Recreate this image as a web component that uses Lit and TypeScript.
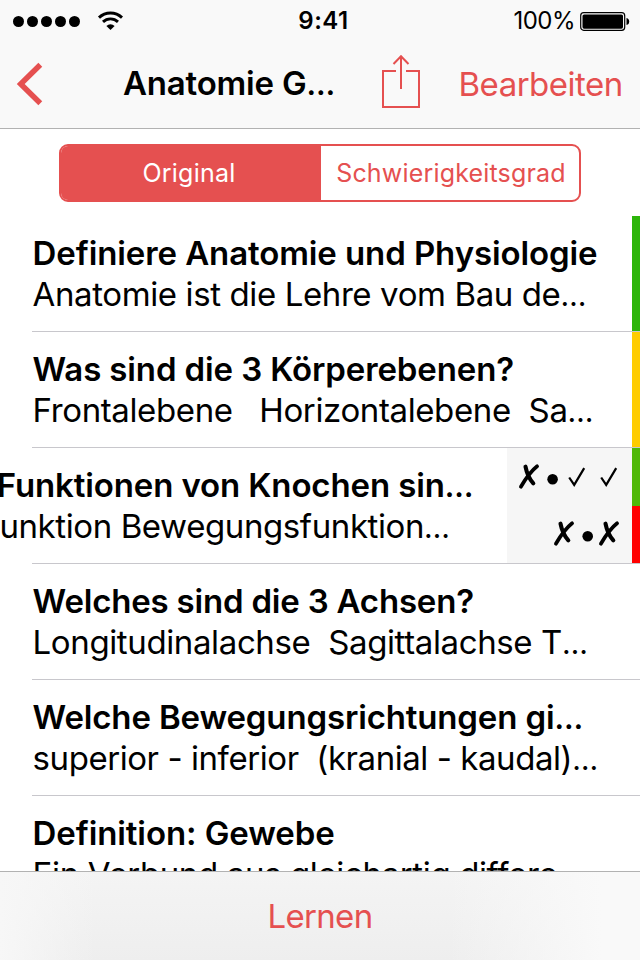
import { LitElement, html, css, svg, nothing } from "lit";
import { customElement, property } from "lit/decorators.js";

interface Card {
  title: string;
  detail: string;
  titleTracking: number;
  detailTracking: number;
  levels: string[];
  swiped?: boolean;
}

const cards: Card[] = [
  { title: "Definiere Anatomie und Physiologie", detail: "Anatomie ist die Lehre vom Bau de…", titleTracking: -0.1, detailTracking: -0.39, levels: ["#2db50a"] },
  { title: "Was sind die 3 Körperebenen?", detail: "Frontalebene   Horizontalebene  Sa…", titleTracking: -0.12, detailTracking: -0.38, levels: ["#ffcc00"] },
  { title: "Funktionen von Knochen sin…", detail: "unktion Bewegungsfunktion…", titleTracking: -0.13, detailTracking: -0.4, levels: ["#4fb808", "#ff0000"], swiped: true },
  { title: "Welches sind die 3 Achsen?", detail: "Longitudinalachse  Sagittalachse T…", titleTracking: -0.2, detailTracking: -0.38, levels: [] },
  { title: "Welche Bewegungsrichtungen gi…", detail: "superior - inferior  (kranial - kaudal)…", titleTracking: -0.15, detailTracking: -0.44, levels: [] },
  { title: "Definition: Gewebe", detail: "Ein Verbund aus gleichartig differe…", titleTracking: -0.1, detailTracking: -0.37, levels: [] },
];

const cross = (x: number, y: number) => svg`
  <g transform="translate(${x} ${y})" fill="none" stroke="#000" stroke-linecap="round">
    <path d="M2.4 22.4C5 18 11 8 18.6 2" stroke-width="3.7"/>
    <path d="M7 2.4C8.2 8.5 11 15 14.8 19" stroke-width="4.1"/>
  </g>`;
const check = (x: number, y: number) => svg`
  <path transform="translate(${x} ${y})" d="M1 10L6 17.4L16 .6" fill="none" stroke="#000" stroke-width="2.2"/>`;
const dot = (x: number, y: number) => svg`<circle cx=${x} cy=${y} r="5.3"/>`;

/** Sets the trailing ellipsis slightly tighter than the text before it. */
const truncated = (text: string) =>
  text.endsWith("…") ? html`${text.slice(0, -1)}<span class="dots">…</span>` : text;

@customElement("card-row")
export class CardRow extends LitElement {
  @property({ attribute: false }) card!: Card;

  static styles = css`
    :host { display: flex; height: 116px; position: relative; }
    .body { flex: 1; min-width: 0; margin-left: 32px; border-bottom: 1px solid #c8c7cc; padding-top: 17px; box-sizing: border-box; overflow: visible; }
    .line { height: 41px; line-height: 41px; margin-left: 0.6px; font-size: 33px; white-space: pre; color: #000; }
    .title { font-weight: 600; }
    .dots { font-size: 30px; }
    .swiped .line { margin-left: -35.2px; }
    .swiped .detail { margin-left: -32.6px; }
    .history { width: 125px; height: 115px; background: #f6f6f6; border-bottom: 1px solid #c8c7cc; }
    .history svg { display: block; }
    .levels { width: 8px; display: flex; flex-direction: column; height: 115px; border-bottom: 1px solid #c8c7cc; }
    .level { flex: 1; }
  `;

  render() {
    const c = this.card;
    return html`
      <div class="body ${c.swiped ? "swiped" : ""}">
        <div class="line title" style="letter-spacing:${c.titleTracking}px">${truncated(c.title)}</div>
        <div class="line detail" style="letter-spacing:${c.detailTracking}px">${truncated(c.detail)}</div>
      </div>
      ${c.swiped
        ? html`<div class="history">
            <svg width="125" height="115" viewBox="0 0 125 115">
              ${cross(11.5, 16.3)}${dot(45.6, 31.2)}${check(61.2, 19.5)}${check(93.2, 19.5)}
              ${cross(46.5, 73.3)}${dot(80.7, 88.2)}${cross(91.5, 73.3)}
            </svg>
          </div>`
        : nothing}
      <div class="levels">
        ${c.levels.map((l) => html`<div class="level" style="background:${l}"></div>`)}
      </div>`;
  }
}

@customElement("app-root")
export class AppRoot extends LitElement {
  static styles = css`
    :host { display: flex; flex-direction: column; width: 640px; height: 960px; overflow: hidden; background: #fff; color: #000; font-family: Inter, "Liberation Sans", sans-serif; }
    .status { display: grid; grid-template-columns: 1fr auto 1fr; align-items: center; height: 40px; background: #f9f9f9; font-size: 24px; line-height: 42px; flex: none; }
    .left, .right { display: flex; align-items: center; }
    .right { justify-content: flex-end; }
    .percent { letter-spacing: -0.5px; margin-right: -1px; }
    .clock { font-weight: 600; letter-spacing: 0.5px; padding-left: 7px; }
    .nav { display: flex; align-items: center; height: 88px; border-bottom: 1px solid #b2b2b2; background: #f9f9f9; flex: none; }
    .back { margin-left: 16px; width: 107px; }
    .heading { width: 258px; font-size: 33px; font-weight: 600; white-space: pre; letter-spacing: -0.2px; padding-bottom: 2px; }
    .dots { font-size: 30px; }
    .share { width: 78px; }
    .edit { font-size: 33px; color: #e55050; white-space: nowrap; letter-spacing: -0.5px; margin-left: -0.5px; }
    svg { display: block; }
    .segments { display: flex; width: 522px; height: 58px; box-sizing: border-box; margin: 15px 0 14px 59px; border: 2px solid #e55050; border-radius: 9px; flex: none; font-size: 25px; line-height: 54px; text-align: center; color: #e55050; overflow: hidden; letter-spacing: 0.18px; }
    .segment { width: 258px; white-space: nowrap; padding-left: 2px; box-sizing: border-box; }
    .on { width: 260px; background: #e55050; color: #fff; padding: 0 4px 0 0; letter-spacing: 0.25px; }
    .list { flex: 1; min-height: 0; overflow: hidden; }
    .toolbar { height: 89px; box-sizing: border-box; border-top: 1px solid #b2b2b2; flex: none; color: #e55050; font-size: 33px; line-height: 89px; text-align: center; letter-spacing: -0.7px;
      background: linear-gradient(90deg, #f7f7f7 0, #f7f7f700 15%, #f7f7f700 70%, #f9f9f9 94%), linear-gradient(#f4f4f4, #eeeeee); }
  `;

  render() {
    return html`
      <div class="status">
        <div class="left">
          <svg width="130" height="40">
            ${[18.5, 32.5, 46.5, 60.5, 74.5].map((x) => svg`<circle cx=${x} cy="20.5" r="5.5"/>`)}
            <g fill="none" stroke="#000" stroke-width="2.9">
              <path d="M99 16.6A16.6 16.6 0 0 1 122 16.6"/>
              <path d="M103 20.9A10.8 10.8 0 0 1 118 20.9"/>
            </g>
            <path d="M106.4 24.9A6 6 0 0 1 114.6 24.9L110.5 29Z"/>
          </svg>
        </div>
        <div class="clock">9:41</div>
        <div class="right">
          <span class="percent">100%</span>
          <svg width="66" height="40">
            <rect x="6.7" y="11.7" width="44" height="17.6" rx="3" fill="none" stroke="#000" stroke-width="1.2"/>
            <rect x="8.5" y="13.4" width="40.5" height="14.3" rx="1.6"/>
            <path d="M52.5 17Q55.2 17.5 55.2 20.5T52.5 24Z"/>
          </svg>
        </div>
      </div>
      <div class="nav">
        <svg class="back" width="107" height="88"><path d="M24.3 24.7L4.7 44L24.3 63.3" fill="none" stroke="#e55050" stroke-width="5.5"/></svg>
        <div class="heading">${truncated("Anatomie G…")}</div>
        <svg class="share" width="78" height="88" fill="none" stroke="#e55050" stroke-width="2">
          <path d="M15 31H2V67H38V31H25M20 49V17M12.5 24L20 16.3L27.5 24"/>
        </svg>
        <div class="edit">Bearbeiten</div>
      </div>
      <div class="segments"><div class="segment on">Original</div><div class="segment">Schwierigkeitsgrad</div></div>
      <div class="list">${cards.map((c) => html`<card-row .card=${c}></card-row>`)}</div>
      <div class="toolbar">Lernen</div>`;
  }
}
